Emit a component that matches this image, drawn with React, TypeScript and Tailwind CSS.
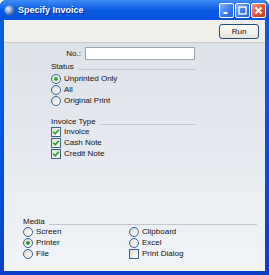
import React from 'react'

const font = { fontFamily: '"Liberation Sans", Arial, sans-serif' }

function Radio({ label, checked }: { label: string; checked?: boolean }) {
  return (
    <div className="flex h-[11px] items-center gap-[3px]">
      <span className="flex h-[10px] w-[10px] items-center justify-center rounded-full border border-[#3a6393] bg-gradient-to-br from-[#dcdcd5] to-white">
        {checked && <span className="h-[4px] w-[4px] rounded-full bg-[#2fa52f]" />}
      </span>
      <span className="text-[8px] leading-none text-[#111]">{label}</span>
    </div>
  )
}

function Check({ label, checked }: { label: string; checked?: boolean }) {
  return (
    <div className="flex h-[11px] items-center gap-[3px]">
      <span className="flex h-[10px] w-[10px] items-center justify-center border border-[#3a6393] bg-gradient-to-br from-[#dcdcd5] to-white">
        {checked && (
          <svg width="8" height="8" viewBox="0 0 8 8">
            <path d="M1.2 3.8 L3.2 5.8 L6.8 1.8" fill="none" stroke="#21a121" strokeWidth="1.6" />
          </svg>
        )}
      </span>
      <span className="text-[8px] leading-none text-[#111]">{label}</span>
    </div>
  )
}

function Header({ label }: { label: string }) {
  return (
    <div className="flex h-[10px] items-end gap-[4px]">
      <span className="text-[8px] leading-none text-[#111]">{label}</span>
      <span className="mb-[1px] h-px flex-1 bg-[#c3c8d0]" />
    </div>
  )
}

function TitleButton({ kind }: { kind: 'min' | 'max' | 'close' }) {
  const close = kind === 'close'
  return (
    <span
      className={
        close
          ? 'flex h-[15px] w-[15px] items-center justify-center rounded-[2px] border border-white bg-gradient-to-br from-[#f0a08a] via-[#e2573a] to-[#c73a1c]'
          : 'flex h-[15px] w-[15px] items-center justify-center rounded-[2px] border border-white bg-gradient-to-br from-[#8fb4f8] via-[#3f7fee] to-[#2460d8]'
      }
    >
      <svg width="9" height="9" viewBox="0 0 9 9">
        {kind === 'min' && <rect x="1.5" y="6" width="4" height="2" fill="white" />}
        {kind === 'max' && <rect x="1" y="1" width="7" height="7" fill="none" stroke="white" strokeWidth="1.4" />}
        {kind === 'close' && <path d="M1.5 1.5 L7.5 7.5 M7.5 1.5 L1.5 7.5" stroke="white" strokeWidth="1.8" />}
      </svg>
    </span>
  )
}

export default function App() {
  return (
    <div style={font} className="flex h-[275px] w-[269px] flex-col overflow-hidden rounded-t-[6px] bg-gradient-to-b from-[#0a5fe0] via-[#0053e0] to-[#0a3fc8]">
      <div className="flex h-[20px] items-center bg-gradient-to-b from-[#3d8cf5] via-[#0a5ae4] to-[#0552de] pl-[4px] pr-[3px]">
        <svg width="11" height="11" viewBox="0 0 11 11" className="mr-[3px]">
          <defs>
            <radialGradient id="g" cx="0.35" cy="0.35" r="0.7">
              <stop offset="0" stopColor="#e8f2ff" />
              <stop offset="0.5" stopColor="#7fa7d8" />
              <stop offset="1" stopColor="#2a4f86" />
            </radialGradient>
          </defs>
          <circle cx="5.5" cy="5.5" r="5" fill="url(#g)" />
        </svg>
        <span className="text-[9px] font-bold leading-none text-white [text-shadow:1px_1px_0_#0a2c88]">Specify Invoice</span>
        <div className="ml-auto flex gap-[1px]">
          <TitleButton kind="min" />
          <TitleButton kind="max" />
          <TitleButton kind="close" />
        </div>
      </div>
      <div className="mx-[4px] mb-[4px] flex flex-1 flex-col">
        <div className="flex h-[23px] justify-end border-b border-[#c9c7bd] bg-[#f0efea] pr-[6px] pt-[4px]">
          <button className="h-[15px] w-[40px] rounded-[3px] border border-[#1f4d7e] bg-gradient-to-b from-white to-[#e6e4db] text-[8px] leading-none text-[#111]">
            Run
          </button>
        </div>
        <div className="flex flex-1 flex-col bg-gradient-to-b from-[#dde1e8] to-[#f1f4f8]">
          <div className="flex items-center pt-[4px]">
            <span className="w-[81px] pr-[4px] text-right text-[8px] leading-none text-[#111]">No.:</span>
            <span className="h-[13px] w-[110px] border border-[#9ea4ac] bg-white" />
          </div>
          <div className="ml-[47px] mt-[1px] w-[145px]">
            <Header label="Status" />
            <div className="mt-[2px]">
              <Radio label="Unprinted Only" checked />
              <Radio label="All" />
              <Radio label="Original Print" />
            </div>
            <div className="mt-[10px]">
              <Header label="Invoice Type" />
            </div>
            <Check label="Invoice" checked />
            <Check label="Cash Note" checked />
            <Check label="Credit Note" checked />
          </div>
          <div className="flex-1" />
          <div className="mb-[12px] ml-[19px] mr-[8px]">
            <Header label="Media" />
            <div className="grid grid-cols-[106px_1fr]">
              <Radio label="Screen" />
              <Radio label="Clipboard" />
              <Radio label="Printer" checked />
              <Radio label="Excel" />
              <Radio label="File" />
              <Check label="Print Dialog" />
            </div>
          </div>
        </div>
      </div>
    </div>
  )
}
